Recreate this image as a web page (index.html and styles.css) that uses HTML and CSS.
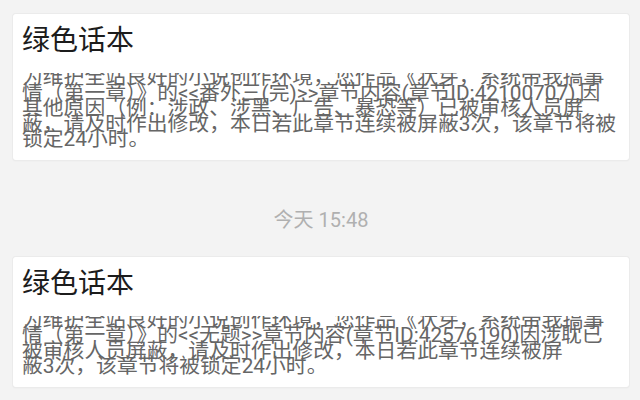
FILE: index.html
```html
<!DOCTYPE html>
<html lang="zh-CN">
<head>
<meta charset="utf-8">
<title>通知</title>
<link rel="stylesheet" href="styles.css">
</head>
<body>
<main class="feed">
  <article class="card">
    <h2 class="card-title">绿色话本</h2>
    <div class="card-body">
      <p class="card-text">为维护全站良好的小说创作环境，您作品《状芽，系统带我搞事<br>情（第一章）》的&lt;&lt;番外三(完)&gt;&gt;章节内容(章节ID:42100707),因<br>其他原因（例：涉政、涉黑、广告、暴恐等）已被审核人员屏<br>蔽，请及时作出修改，本日若此章节连续被屏蔽3次，该章节将被<br>锁定24小时。</p>
    </div>
  </article>
  <div class="time">今天 15:48</div>
  <article class="card">
    <h2 class="card-title">绿色话本</h2>
    <div class="card-body">
      <p class="card-text">为维护全站良好的小说创作环境，您作品《状芽，系统带我搞事<br>情（第一章）》的&lt;&lt;无题&gt;&gt;章节内容(章节ID:42576190)因涉耽已<br>被审核人员屏蔽，请及时作出修改，本日若此章节连续被屏<br>蔽3次，该章节将被锁定24小时。</p>
    </div>
  </article>
</main>
</body>
</html>
```

FILE: styles.css
```css
html, body {
  margin: 0;
  padding: 0;
  background: #f3f3f3;
}

body {
  font-family: Roboto, "Noto Sans CJK SC", sans-serif;
  width: 640px;
  height: 400px;
  overflow: hidden;
}

.feed {
  display: flex;
  flex-direction: column;
  padding: 14px 11px 0 13px;
}

.card {
  background: #ffffff;
  border-radius: 3px;
  box-shadow: 0 0 0 1px #ebebeb, 0 1px 2px rgba(0, 0, 0, 0.06);
  padding: 11px 6px 8px 9px;
}

.card-title {
  margin: 0;
  font-size: 28px;
  line-height: 32px;
  font-weight: 400;
  color: #1c1c1c;
}

.card-body {
  margin-top: 16px;
  overflow: hidden;
}

.card-text {
  margin: -3px 0 0 0;
  padding-bottom: 4px;
  font-size: 20.8px;
  line-height: 15.5px;
  color: #666666;
  white-space: nowrap;
}

.time {
  margin: 48px 0 24px;
  text-align: center;
  font-size: 20px;
  line-height: 25px;
  color: #b0b0b0;
}
```
